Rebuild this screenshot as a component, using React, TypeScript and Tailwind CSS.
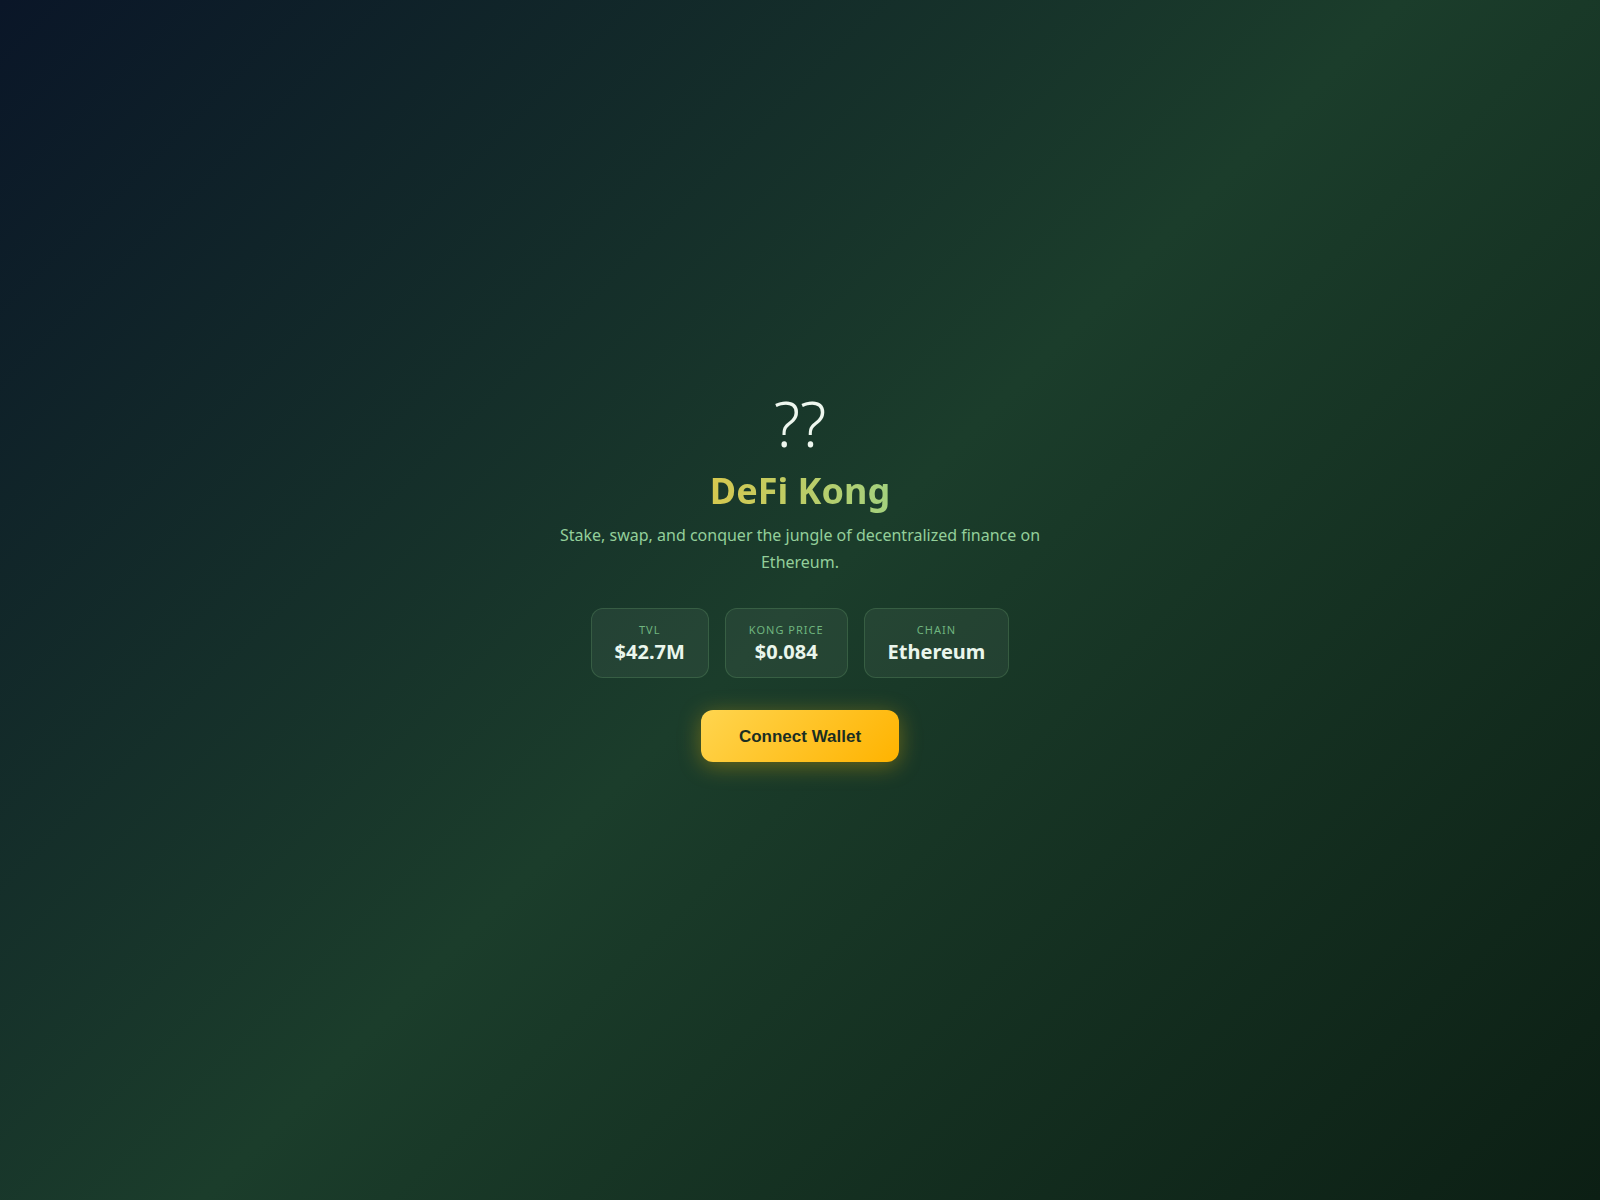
import React from "react";

const stats: { label: string; value: string }[] = [
  { label: "TVL", value: "$42.7M" },
  { label: "Kong Price", value: "$0.084" },
  { label: "Chain", value: "Ethereum" },
];

export default function App() {
  return (
    <div className="min-h-screen w-full flex items-center justify-center pb-[46px] bg-[linear-gradient(135deg,#0a1628_0%,#1b3d2b_50%,#0c1f14_100%)] font-['Noto_Sans',sans-serif]">
      <div className="flex flex-col items-center text-center">
        <div className="text-[62px] leading-none text-[#eef7ef] font-light">??</div>
        <h1 className="mt-[14px] text-[36px] leading-tight font-bold bg-[linear-gradient(90deg,#d6c84f,#a3d17e)] bg-clip-text text-transparent">
          DeFi Kong
        </h1>
        <p className="mt-[9px] max-w-[490px] text-[16px] leading-[27px] text-[#93cf9a]">
          Stake, swap, and conquer the jungle of decentralized finance on Ethereum.
        </p>

        <div className="mt-[32px] flex gap-4">
          {stats.map(({ label, value }) => (
            <div
              key={label}
              className="flex flex-col items-center rounded-xl border border-[#81c78433] bg-[#ffffff0d] px-[23px] pt-[13px] pb-[13px]"
            >
              <span className="text-[11px] uppercase tracking-[1px] text-[#6fb57f]">{label}</span>
              <span className="mt-[1px] text-[20px] font-bold leading-tight text-[#eaf6ec]">{value}</span>
            </div>
          ))}
        </div>

        <button className="mt-8 h-[52px] px-[38px] rounded-xl bg-[linear-gradient(135deg,#ffd54f,#ffb300)] font-['Liberation_Sans',Arial,sans-serif] text-[17px] font-bold text-[#1b2e22] shadow-[0_4px_22px_rgba(255,193,7,0.35)]">
          Connect Wallet
        </button>
      </div>
    </div>
  );
}
